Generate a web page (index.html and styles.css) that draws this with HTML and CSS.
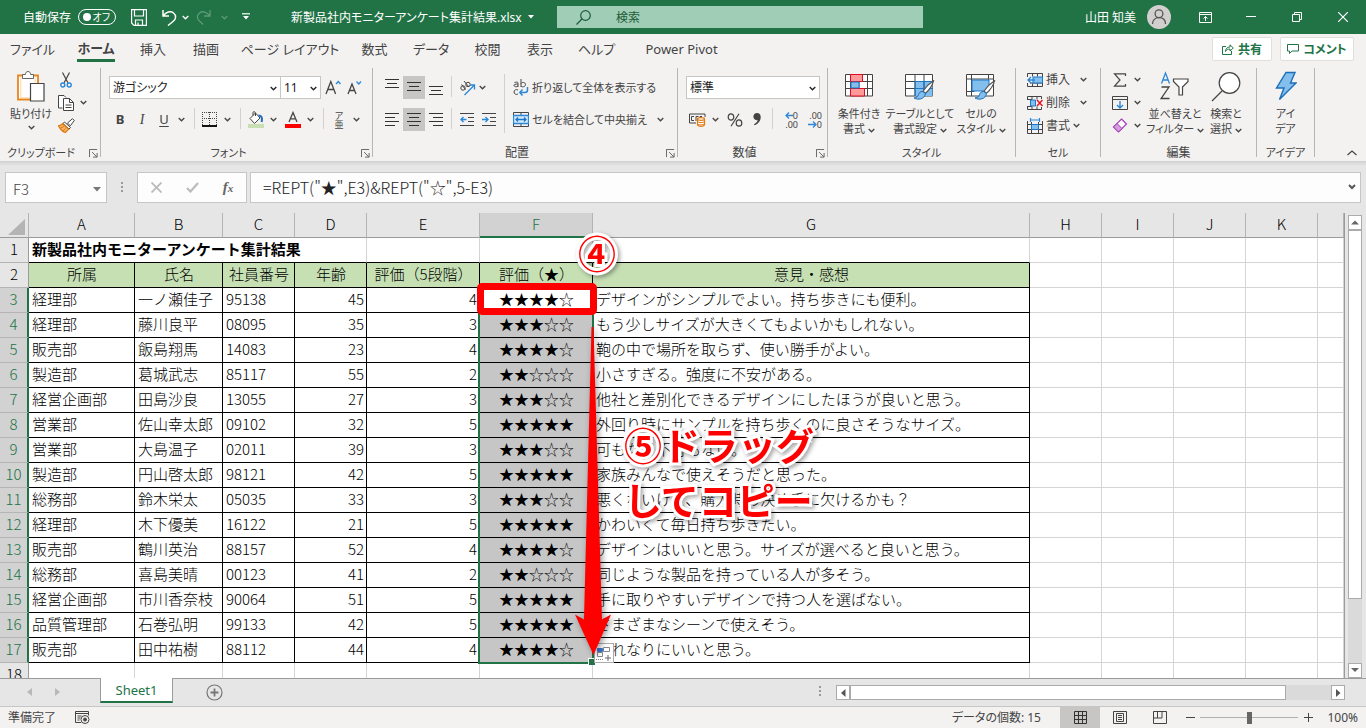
FILE: index.html
```
<!DOCTYPE html>
<html lang="ja">
<head>
<meta charset="utf-8">
<title>新製品社内モニターアンケート集計結果.xlsx</title>
<link rel="stylesheet" href="styles.css">
</head>
<body>
<svg class="defs" width="0" height="0" aria-hidden="true">
  <symbol id="chev" viewBox="0 0 7 5"><path d="M.7 1l2.8 2.8L6.300 1" fill="none" stroke="currentColor" stroke-width="1.300"/></symbol>
  <symbol id="launch" viewBox="0 0 10 10"><path d="M9 .5H.5V9M3.500 3.500l5 5M9 4.500V9H4.500" fill="none" stroke="#555"/></symbol>
  <symbol id="brush" viewBox="0 0 22 20"><path d="M20.500.8c-4 2.500-8 6.500-10.500 10.500l2.500 2C16 10 19.500 5 20.500.8z" fill="#fff" stroke="#555" stroke-width="1.200"/><path d="M9.500 11.500c-2 0-3.500 1-4 3-.5 2-2 3.200-4.500 3.500 4 2.200 10.500 1.500 11.500-4.500z" fill="#83beec" stroke="#1a6fb8"/></symbol>
</svg>

<header class="titlebar">
  <label class="autosave">自動保存
    <input type="checkbox" class="sr"><span class="toggle"><i></i>オフ</span>
  </label>
  <div class="quick">
    <button aria-label="保存"><svg width="16" height="17" viewBox="0 0 16 17" fill="none" stroke="#fff" stroke-width="1.200"><path d="M.6.6h14.800v15.800H3L.6 14zM3.500.6v6.400h9V.6M4.500 16.400v-5.400h7v5.400M7 16v-2.500"/></svg></button>
    <button aria-label="元に戻す"><svg width="15" height="17" viewBox="0 0 15 17" fill="none" stroke="#fff" stroke-width="1.500"><path d="M1 1v6h6M1.300 6.700C4 3 8.500 1.500 11.500 4s2.700 6-.5 8.500L6 16.500"/></svg></button>
    <button aria-label="元に戻すの一覧"><svg width="7" height="5"><use href="#chev"/></svg></button>
    <button aria-label="やり直し" class="dim"><svg width="15" height="17" viewBox="0 0 15 17" fill="none" stroke="currentColor" stroke-width="1.300"><path d="M14 1v6H8M13.700 6.700C11 3 6.500 1.500 3.500 4S.8 10 4 12.500l3 3"/></svg></button>
    <button aria-label="やり直しの一覧" class="dim"><svg width="7" height="5"><use href="#chev"/></svg></button>
    <button aria-label="クイック アクセスのカスタマイズ"><svg width="8" height="8" viewBox="0 0 8 8"><path d="M0 .8h8" stroke="#fff" stroke-width="1.200"/><path d="M1 3h6L4 6.500z" fill="#fff"/></svg></button>
  </div>
  <button class="filename">新製品社内モニターアンケート集計結果.xlsx <svg width="7" height="4" viewBox="0 0 7 4"><path d="M0 0h6L3 3.500z" fill="#fff"/></svg></button>
  <div class="search">
    <svg width="15" height="15" viewBox="0 0 15 15" fill="none" stroke="#1d5c39" stroke-width="1.200"><circle cx="9.500" cy="5.500" r="4.800"/><path d="M6 9L.5 14.500"/></svg>
    <input type="text" placeholder="検索" aria-label="検索">
  </div>
  <div class="account">
    <span>山田 知美</span>
    <svg width="24" height="24" viewBox="0 0 24 24"><circle cx="12" cy="12" r="12" fill="#d2d0ce"/><g fill="none" stroke="#555" stroke-width="1.300"><circle cx="12" cy="8.800" r="3.900"/><path d="M5.500 19c0-4 2.700-6.300 6.500-6.300s6.500 2.300 6.500 6.300"/></g></svg>
  </div>
  <div class="window">
    <button aria-label="リボンの表示オプション"><svg width="13" height="11" viewBox="0 0 13 11" fill="none" stroke="#fff"><path d="M.5.5h12v10H.5zM.5 2.500h12M6.500 9V4.500M4.500 6.500l2-2 2 2"/></svg></button>
    <button aria-label="最小化"><svg width="10" height="2"><path d="M0 .5h10" stroke="#fff"/></svg></button>
    <button aria-label="元に戻す"><svg width="10" height="10" viewBox="0 0 10 10" fill="none" stroke="#fff"><path d="M.5 2.500h7v7h-7zM2.500 2.500v-2h7v7h-2"/></svg></button>
    <button aria-label="閉じる"><svg width="10" height="10" viewBox="0 0 10 10" stroke="#fff" stroke-width="1.200"><path d="M0 0l10 10M10 0L0 10"/></svg></button>
  </div>
</header>

<nav class="tabs">
  <button>ファイル</button><button class="active"><span>ホーム</span></button><button>挿入</button><button>描画</button><button>ページ レイアウト</button><button>数式</button><button>データ</button><button>校閲</button><button>表示</button><button>ヘルプ</button><button>Power Pivot</button>
  <div class="share">
    <button><svg width="12" height="11" viewBox="0 0 12 11" fill="none" stroke="#217346"><path d="M4 2.500H.5v8h9V7M3.500 7.500C3.500 4.500 5.500 3 8 3V.8L11.300 4 8 7V5C6 5 4.500 5.800 3.500 7.500z"/></svg>共有</button>
    <button><svg width="12" height="10" viewBox="0 0 12 10" fill="none" stroke="#217346"><path d="M.5.5h11v6.500H5L2.500 9.500V7h-2z"/></svg>コメント</button>
  </div>
</nav>

<section class="ribbon">
  <div class="group g-clip">
    <div class="body">
      <button class="big">
        <svg width="28" height="31" viewBox="0 0 28 31"><path d="M1 4.500h20v24H1z" fill="#fff" stroke="#e8861e" stroke-width="1.800"/><path d="M3 7h16v20H3z" fill="#fbe3c0"/><path d="M4.500 8h13v18h-13z" fill="#fff"/><path d="M5.500 7.500V3.500h3C8.500 1.500 9.500.5 11 .5s2.500 1 2.500 3h3v4z" fill="#fff" stroke="#666"/><path d="M13.500 12.500h13.500v17.500H13.500z" fill="#fff" stroke="#444" stroke-width="1.200"/></svg>
        <span>貼り付け</span><svg class="chev" width="7" height="5"><use href="#chev"/></svg>
      </button>
      <div class="rows3">
        <button aria-label="切り取り"><svg width="16" height="16" viewBox="-2 0 16 16" fill="none"><path d="M2.500.5l5.500 10.500M9.500.5L4 11" stroke="#444" stroke-width="1.200"/><circle cx="2.800" cy="13" r="2" stroke="#2b88d8" stroke-width="1.400"/><circle cx="9.200" cy="13" r="2" stroke="#2b88d8" stroke-width="1.400"/></svg></button>
        <button aria-label="コピー"><svg width="16" height="16" viewBox="0 0 16 16" fill="#fff" stroke="#444"><path d="M4.500 13H.5V.5h5.500l2 2"/><path d="M5.500 3.500h6l4 4v8h-10z"/><path d="M11.500 3.500v4h4M7.500 10h6M7.500 12.500h6" fill="none"/></svg><svg class="chev" width="7" height="5"><use href="#chev"/></svg></button>
        <button aria-label="書式のコピー/貼り付け"><svg width="17" height="15" viewBox="0 0 17 15"><path d="M9.500 5L14.500.7l1.800 1.800-4 5.300z" fill="#fff" stroke="#444"/><path d="M6.500 4l6 5.500-1.500 1.500L5 5.500z" fill="#fff" stroke="#444"/><path d="M4.500 5.700C3.500 7 2 7.500.5 7.800c2 4 4.500 6 7 6.700 1-1.500 2.200-2.500 3.200-3.200z" fill="#f8b26a" stroke="#e07b10" stroke-width="1.200"/><path d="M2.500 10l3.500-1.500M5 13l2.500-2.500" stroke="#e07b10"/></svg></button>
      </div>
    </div>
    <div class="cap kana">クリップボード<button class="launch" aria-label="クリップボードの詳細"><svg width="9" height="9"><use href="#launch"/></svg></button></div>
  </div>

  <div class="group g-font">
    <div class="body lines">
      <div class="line">
        <span class="combo c-name"><select aria-label="フォント"><option>游ゴシック</option></select><svg width="7" height="5"><use href="#chev"/></svg></span>
        <span class="combo c-size"><select aria-label="フォント サイズ"><option>11</option></select><svg width="7" height="5"><use href="#chev"/></svg></span>
        <button class="grow" aria-label="フォント サイズの拡大"><svg width="16" height="16" viewBox="0 0 16 16" fill="none"><path d="M1 14L5.800 1.500l4.800 12.500M2.800 9.500h6" stroke="#444" stroke-width="1.300"/><path d="M11 4l2.300-2.500L15.500 4" stroke="#2b88d8" stroke-width="1.300"/></svg></button>
        <button aria-label="フォント サイズの縮小"><svg width="15" height="16" viewBox="0 0 15 16" fill="none"><path d="M1 14L5 4l4 10M2.500 10.500h5" stroke="#444" stroke-width="1.300"/><path d="M9.500 1.500L11.800 4l2.200-2.500" stroke="#2b88d8" stroke-width="1.300"/></svg></button>
      </div>
      <div class="line fontrow">
        <button class="b">B</button><button class="i">I</button><button class="u">U</button>
        <button aria-label="下線の種類"><svg width="7" height="5"><use href="#chev"/></svg></button><i class="sep"></i>
        <button aria-label="罫線"><svg width="15" height="15" viewBox="0 0 15 15" fill="none" stroke="#444"><path d="M0 .5h15M.5 0v13M14.500 0v13M7.500 0v13M0 6.500h15" stroke-dasharray="1 1"/><path d="M0 14h15" stroke="#111" stroke-width="2"/></svg></button>
        <button aria-label="罫線の一覧"><svg width="7" height="5"><use href="#chev"/></svg></button><i class="sep"></i>
        <button aria-label="塗りつぶしの色"><svg width="16" height="17" viewBox="0 0 16 17"><path d="M2 7.500L7.500 2l4.500 5-5.500 5.500z" fill="#fff" stroke="#444"/><path d="M5 4.500V1.500C5 .5 7 .2 7.500 2v3" fill="none" stroke="#444"/><path d="M10.500 4.500c3 0 4 2 3.200 6.500" fill="none" stroke="#1e6fc0" stroke-width="2"/><path d="M0 13h16v4H0z" fill="#c6e0b4"/></svg></button>
        <button aria-label="塗りつぶしの色の一覧"><svg width="7" height="5"><use href="#chev"/></svg></button>
        <button aria-label="フォントの色"><svg width="16" height="17" viewBox="0 0 16 17"><path d="M4 11L8 1.500l4 9.500M5.300 7.800h5.400" fill="none" stroke="#444" stroke-width="1.300"/><path d="M0 13h16v4H0z" fill="#f00"/></svg></button>
        <button aria-label="フォントの色の一覧"><svg width="7" height="5"><use href="#chev"/></svg></button><i class="sep"></i>
        <button class="ruby" aria-label="ふりがな"><small>ア</small><b>亜</b></button>
        <button aria-label="ふりがなの一覧"><svg width="7" height="5"><use href="#chev"/></svg></button>
      </div>
    </div>
    <div class="cap kana">フォント<button class="launch" aria-label="フォントの詳細"><svg width="9" height="9"><use href="#launch"/></svg></button></div>
  </div>

  <div class="group g-align">
    <div class="body">
      <div class="lines">
        <div class="line alignrow">
          <button aria-label="上揃え"><svg width="14" height="21" viewBox="0 0 14 21" stroke="#333"><path d="M0 2.500h14M2 6.500h10M0 10.500h14"/></svg></button>
          <button class="on" aria-label="上下中央揃え"><svg width="14" height="21" viewBox="0 0 14 21" stroke="#333"><path d="M0 5.500h14M2 9.500h10M0 13.500h14"/></svg></button>
          <button aria-label="下揃え"><svg width="14" height="21" viewBox="0 0 14 21" stroke="#333"><path d="M0 9.500h14M2 13.500h10M0 17.500h14"/></svg></button><i class="sep"></i>
          <button aria-label="方向"><svg width="17" height="16" viewBox="0 0 17 16" fill="none"><g stroke="#444"><circle cx="4" cy="8" r="2.200"/><path d="M2.500 4.500l4 5M5 1l5 6"/><circle cx="9" cy="4.500" r="2.200"/></g><path d="M5.500 15L15 5.500M11 5h4.500v4.500" stroke="#2b88d8" stroke-width="1.300"/></svg></button>
          <button aria-label="方向の一覧" class="near"><svg width="7" height="5"><use href="#chev"/></svg></button>
        </div>
        <div class="line alignrow">
          <button aria-label="左揃え"><svg width="14" height="15" viewBox="0 0 14 15" stroke="#333"><path d="M0 1.500h14M0 5.500h10M0 9.500h14M0 13.500h10"/></svg></button>
          <button class="on" aria-label="中央揃え"><svg width="14" height="15" viewBox="0 0 14 15" stroke="#333"><path d="M0 1.500h14M2 5.500h10M0 9.500h14M2 13.500h10"/></svg></button>
          <button aria-label="右揃え"><svg width="14" height="15" viewBox="0 0 14 15" stroke="#333"><path d="M0 1.500h14M4 5.500h10M0 9.500h14M4 13.500h10"/></svg></button><i class="sep"></i>
          <button aria-label="インデントを減らす"><svg width="14" height="15" viewBox="0 0 14 15" fill="none"><path d="M0 1.500h14M8 5.500h6M8 9.500h6M0 13.500h14" stroke="#444"/><path d="M6.500 7.500H1M3.500 5L1 7.500 3.500 10" stroke="#2b88d8" stroke-width="1.400"/></svg></button>
          <button aria-label="インデントを増やす"><svg width="14" height="15" viewBox="0 0 14 15" fill="none"><path d="M0 1.500h14M8 5.500h6M8 9.500h6M0 13.500h14" stroke="#444"/><path d="M0 7.500h6M3.500 5L6 7.500 3.500 10" stroke="#2b88d8" stroke-width="1.400"/></svg></button>
        </div>
      </div>
      <i class="sep tall"></i>
      <div class="lines">
        <div class="line"><button class="txt"><svg width="16" height="17" viewBox="0 0 16 17" fill="none"><g stroke="#444"><path d="M1.500 3.500c3.500-1 3.500 0 3.500 1V8M5 5C2 5 1 5.500 1 6.500S3.500 8.500 5 7M8 0v8M8 4.500C9 3 12.500 3 12.500 5.500S9 8.500 8 7M5 11C3 10 1 11 1 13s2 3 4 2"/></g><path d="M14.500 8v3c0 2-1 2.500-2.500 2.500H7M9.500 10.500L6.800 13.500l2.700 3" stroke="#2b88d8" stroke-width="1.500"/></svg><span>折り返して全体を表示する</span></button></div>
        <div class="line"><button class="txt"><svg width="16" height="15" viewBox="0 0 16 15" fill="none"><path d="M.5.500h15v14H.5zM8 .5v3M8 11.500v3" stroke="#444"/><path d="M.5 3.500h15v8H.5z" fill="#d5eafa" stroke="#2b88d8" stroke-width="1.300"/><path d="M3 7.500h10M5 5.500l-2 2 2 2M11 5.500l2 2-2 2" stroke="#1a77c9" stroke-width="1.300"/></svg><span>セルを結合して中央揃え</span></button><button class="push" aria-label="結合の一覧"><svg width="7" height="5"><use href="#chev"/></svg></button></div>
      </div>
    </div>
    <div class="cap">配置<button class="launch" aria-label="配置の詳細"><svg width="9" height="9"><use href="#launch"/></svg></button></div>
  </div>

  <div class="group g-num">
    <div class="body lines">
      <div class="line"><span class="combo c-fmt"><select aria-label="表示形式"><option>標準</option></select><svg width="7" height="5"><use href="#chev"/></svg></span></div>
      <div class="line numrow">
        <button aria-label="通貨表示形式"><svg width="17" height="14" viewBox="0 0 17 14" fill="none"><path d="M16 4V1H.5v9H7" stroke="#444"/><path d="M5 3.500H2.500v4H5M7 8V3.500h2.500M11 5V3.500h2" stroke="#444"/><path d="M8.500 6v6c1 1.800 6 1.800 7 0V6" fill="#fff" stroke="#e07b10" stroke-width="1.200"/><ellipse cx="12" cy="6" rx="3.500" ry="1.300" fill="#fff" stroke="#e07b10" stroke-width="1.200"/><path d="M8.500 8.500c1 1.500 6 1.500 7 0M8.500 10.800c1 1.500 6 1.500 7 0" stroke="#e07b10"/></svg></button>
        <button aria-label="通貨の一覧"><svg width="7" height="5"><use href="#chev"/></svg></button>
        <button aria-label="パーセント スタイル"><svg width="16" height="14" viewBox="0 0 16 14" fill="none" stroke="#444" stroke-width="1.200"><ellipse cx="4" cy="4" rx="2.800" ry="3.200"/><ellipse cx="12" cy="10" rx="2.800" ry="3.200"/><path d="M12 .8L4 13.300"/></svg></button>
        <button aria-label="桁区切りスタイル"><svg width="8" height="13" viewBox="0 0 8 13"><path d="M4 0c2.300 0 3.700 1.600 3.700 4 0 3.800-2.400 6.800-6.200 8.300L1 11.300c2.200-1.100 3.500-2.500 3.600-4.200C2 7.600.4 6 .4 3.600.4 1.500 1.900 0 4 0z" fill="#444"/></svg></button><i class="sep"></i>
        <button aria-label="小数点以下の表示桁数を増やす" class="dec"><span><svg width="8" height="7" viewBox="0 0 8 7" fill="none" stroke="#2b88d8" stroke-width="1.300"><path d="M8 3.500H1M4 .5l-3 3 3 3"/></svg>0</span><span>.00</span></button>
        <button aria-label="小数点以下の表示桁数を減らす" class="dec"><span>.00</span><span><svg width="9" height="7" viewBox="0 0 9 7" fill="none" stroke="#2b88d8" stroke-width="1.300"><path d="M0 3.500h8M5 .5l3 3-3 3"/></svg>0</span></button>
      </div>
    </div>
    <div class="cap">数値<button class="launch" aria-label="数値の詳細"><svg width="9" height="9"><use href="#launch"/></svg></button></div>
  </div>

  <div class="group g-style">
    <div class="body">
      <button class="big"><svg width="28" height="29" viewBox="0 0 28 29"><path d="M.5 3.500h27v21.500H.5z" fill="#fff" stroke="#444"/><path d="M.5 10.500h27M.5 17.500h27M5.500 3.500V25M14 3.500V25M22.500 3.500V25" stroke="#444"/><path d="M5.500 3.500h12v7h-12zM5.500 17.500h14V25h-14z" fill="#ff9a9a" stroke="#e00b1c"/><path d="M6 11h8v6H6z" fill="#83beec" stroke="#1a77c9"/></svg><span>条件付き<br>書式 <svg width="7" height="5"><use href="#chev"/></svg></span></button>
      <button class="big"><svg width="31" height="29" viewBox="0 0 31 29"><path d="M.5 3.500h27v21.500H.5z" fill="#fff" stroke="#444"/><path d="M10 11h17.500v14H10z" fill="#83beec"/><path d="M.5 10.500h27M.5 17.500h27M10 3.500V25M19 3.500V25" stroke="#444"/><path d="M10 10.500h17.500M10 17.500h17.500M10 10.500V25M19 10.500V25" stroke="#1a77c9"/><svg x="8" y="9" width="22" height="20"><use href="#brush"/></svg></svg><span>テーブルとして<br>書式設定 <svg width="7" height="5"><use href="#chev"/></svg></span></button>
      <button class="big"><svg width="31" height="29" viewBox="0 0 31 29"><path d="M.5 3.500h27v21.500H.5z" fill="#fff" stroke="#444"/><path d="M.5 8h27M5.500 3.500V25M22.500 3.500v5M.5 20.500h8" stroke="#444"/><path d="M6 9h17v11H6z" fill="#83beec" stroke="#1a77c9"/><svg x="8" y="9" width="22" height="20"><use href="#brush"/></svg></svg><span>セルの<br>スタイル <svg width="7" height="5"><use href="#chev"/></svg></span></button>
    </div>
    <div class="cap kana">スタイル</div>
  </div>

  <div class="group g-cell">
    <div class="body">
      <div class="rows3">
        <button><svg width="16" height="14" viewBox="0 0 16 14" fill="none"><path d="M.5 4V.5h15v13H.5V10M5.500.5v3M10.500.5v3M5.500 10.500v3M10.500 10.500v3M3 10h12.500" stroke="#444"/><path d="M6 4h9.500v6H6z" fill="#83beec" stroke="#1a77c9"/><path d="M8 7H1M4 4L1 7l3 3" stroke="#2b88d8" stroke-width="1.400"/></svg><span>挿入</span><svg class="chev" width="7" height="5"><use href="#chev"/></svg></button>
        <button><svg width="16" height="14" viewBox="0 0 16 14" fill="none"><path d="M.5 3.500V.5h14V3M5 .5v3M10 .5v3M.5 10.500v3h14V11M5 10.500v3M10 10.500v3M0 3.500h5M0 10.500h5" stroke="#444"/><path d="M3.500 4h5v6h-5z" fill="#83beec" stroke="#1a77c9"/><path d="M10 4l5.500 6M15.500 4L10 10" stroke="#e81123" stroke-width="1.500"/></svg><span>削除</span><svg class="chev" width="7" height="5"><use href="#chev"/></svg></button>
        <button><svg width="16" height="16" viewBox="0 0 16 16" fill="none"><path d="M.5 3v12.500h15V3M.5 6.500h15M.5 11.500h15M4.500 4v11.500M11.500 4v11.500" stroke="#444"/><path d="M4.500 6.500h7v5h-7z" fill="#83beec" stroke="#1a77c9"/><path d="M3.500 2h9M3.500 0v4M12.500 0v4" stroke="#2b88d8" stroke-width="1.200"/></svg><span>書式</span><svg width="7" height="5"><use href="#chev"/></svg></button>
      </div>
    </div>
    <div class="cap kana">セル</div>
  </div>

  <div class="group g-edit">
    <div class="body">
      <div class="rows3">
        <button aria-label="オート SUM"><svg width="16" height="14" viewBox="0 0 16 14" fill="none" stroke="#444" stroke-width="1.200"><path d="M13.500 3V.8h-11L8 7l-5.500 6.200h11V11"/></svg><svg width="7" height="5"><use href="#chev"/></svg></button>
        <button aria-label="フィル"><svg width="16" height="14" viewBox="0 0 16 14" fill="none"><path d="M.5.5h15v13H.5zM.5 3.500h15" stroke="#444"/><path d="M8 5v7M5 9l3 3 3-3" stroke="#2b88d8" stroke-width="1.400"/></svg><svg width="7" height="5"><use href="#chev"/></svg></button>
        <button aria-label="クリア"><svg width="16" height="15" viewBox="0 0 16 15"><path d="M9.500 1l5 5-8 8-5-5z" fill="#fff" stroke="#a33fb5" stroke-width="1.200"/><path d="M5 5.500l5 5L6.500 14l-5-5z" fill="#d59ddf" stroke="#a33fb5"/></svg><svg width="7" height="5"><use href="#chev"/></svg></button>
      </div>
      <button class="big"><svg width="30" height="31" viewBox="0 0 30 31" fill="none"><path d="M1.500 12.500L5.500 2l4 10.500M2.800 9h5.400" stroke="#2b88d8" stroke-width="1.300"/><path d="M1.500 16h7.500L1.200 27.500h8.300" stroke="#444" stroke-width="1.300"/><path d="M13.500 8h14.500v2.500l-5.500 5.500v8h-3.500v-8L13.500 10.500z" fill="#fff" stroke="#444" stroke-width="1.200"/></svg><span>並べ替えと<br>フィルター <svg width="7" height="5"><use href="#chev"/></svg></span></button>
      <button class="big"><svg width="30" height="31" viewBox="0 0 30 31"><circle cx="18.500" cy="12" r="10.300" fill="#fff" stroke="#444" stroke-width="1.200"/><path d="M11 20L1 30" stroke="#444" stroke-width="1.300"/></svg><span>検索と<br>選択 <svg width="7" height="5"><use href="#chev"/></svg></span></button>
    </div>
    <div class="cap">編集</div>
  </div>

  <div class="group g-idea">
    <div class="body"><button class="big"><svg width="22" height="30" viewBox="0 0 22 30"><path d="M11 1.500h9L15.500 12H21L4.500 28.500 9 17H1.500z" fill="#83beec" stroke="#1a6fb8" stroke-width="1.400"/></svg><span>アイ<br>デア</span></button></div>
    <div class="cap kana">アイデア</div>
  </div>
  <button class="collapse" aria-label="リボンを折りたたむ"><svg width="10" height="6" viewBox="0 0 10 6" fill="none" stroke="#444" stroke-width="1.200"><path d="M.5 5L5 1l4.500 4"/></svg></button>
</section>

<section class="fbar">
  <div class="namebox"><input type="text" value="F3" aria-label="名前ボックス"><svg width="8" height="5"><path d="M0 0h8L4 4.500z" fill="#777"/></svg></div>
  <svg class="dots" width="2" height="11" fill="#999"><path d="M0 0h2v2H0zM0 4h2v2H0zM0 8h2v2H0z"/></svg>
  <div class="fx">
    <button aria-label="キャンセル"><svg width="11" height="11" viewBox="0 0 11 11" stroke="#bbb" stroke-width="1.800"><path d="M.5.5l10 10M10.500.5l-10 10"/></svg></button>
    <button aria-label="入力"><svg width="13" height="11" viewBox="0 0 13 11" fill="none" stroke="#bbb" stroke-width="2.200"><path d="M1 6l3.500 3.500L12 1"/></svg></button>
    <button class="fn">f<sub>x</sub></button>
  </div>
  <div class="formula"><input type="text" value="=REPT(&quot;★&quot;,E3)&amp;REPT(&quot;☆&quot;,5-E3)" aria-label="数式バー"><svg width="8" height="6" viewBox="0 0 8 6"><path d="M1 1l3 3 3-3" fill="none" stroke="#555" stroke-width="2"/></svg></div>
</section>

<main class="workspace">
  <div class="sheet">
    <table>
      <colgroup><col class="w-h"><col class="w-a"><col class="w-b"><col class="w-c"><col class="w-c"><col class="w-e"><col class="w-e"><col class="w-g"><col class="w-c"><col class="w-c"><col class="w-c"><col class="w-c"><col></colgroup>
      <thead><tr><th class="corner"><svg width="17" height="16"><path d="M17 0v16H0z" fill="#b4b4b4"/></svg></th><th>A</th><th>B</th><th>C</th><th>D</th><th>E</th><th class="sel">F</th><th>G</th><th>H</th><th>I</th><th>J</th><th>K</th><th></th></tr></thead>
      <tbody>
        <tr class="title"><th>1</th><td colspan="4">新製品社内モニターアンケート集計結果</td><td></td><td></td><td></td><td></td><td></td><td></td><td></td><td></td></tr>
        <tr class="head"><th>2</th><td>所属</td><td>氏名</td><td>社員番号</td><td>年齢</td><td>評価（5段階）</td><td>評価（★）</td><td>意見・感想</td><td></td><td></td><td></td><td></td><td></td></tr>
        <tr class="rec"><th>3</th><td>経理部</td><td>一ノ瀬佳子</td><td>95138</td><td>45</td><td>4</td><td class="first">★★★★☆</td><td>デザインがシンプルでよい。持ち歩きにも便利。</td><td></td><td></td><td></td><td></td><td></td></tr>
        <tr class="rec"><th>4</th><td>経理部</td><td>藤川良平</td><td>08095</td><td>35</td><td>3</td><td>★★★☆☆</td><td>もう少しサイズが大きくてもよいかもしれない。</td><td></td><td></td><td></td><td></td><td></td></tr>
        <tr class="rec"><th>5</th><td>販売部</td><td>飯島翔馬</td><td>14083</td><td>23</td><td>4</td><td>★★★★☆</td><td>鞄の中で場所を取らず、使い勝手がよい。</td><td></td><td></td><td></td><td></td><td></td></tr>
        <tr class="rec"><th>6</th><td>製造部</td><td>葛城武志</td><td>85117</td><td>55</td><td>2</td><td>★★☆☆☆</td><td>小さすぎる。強度に不安がある。</td><td></td><td></td><td></td><td></td><td></td></tr>
        <tr class="rec"><th>7</th><td>経営企画部</td><td>田島沙良</td><td>13055</td><td>27</td><td>3</td><td>★★★☆☆</td><td>他社と差別化できるデザインにしたほうが良いと思う。</td><td></td><td></td><td></td><td></td><td></td></tr>
        <tr class="rec"><th>8</th><td>営業部</td><td>佐山幸太郎</td><td>09102</td><td>32</td><td>5</td><td>★★★★★</td><td>外回り時にサンプルを持ち歩くのに良さそうなサイズ。</td><td></td><td></td><td></td><td></td><td></td></tr>
        <tr class="rec"><th>9</th><td>営業部</td><td>大島温子</td><td>02011</td><td>39</td><td>3</td><td>★★★☆☆</td><td>可もなく不可もない。</td><td></td><td></td><td></td><td></td><td></td></tr>
        <tr class="rec"><th>10</th><td>製造部</td><td>円山啓太郎</td><td>98121</td><td>42</td><td>5</td><td>★★★★★</td><td>家族みんなで使えそうだと思った。</td><td></td><td></td><td></td><td></td><td></td></tr>
        <tr class="rec"><th>11</th><td>総務部</td><td>鈴木栄太</td><td>05035</td><td>33</td><td>3</td><td>★★★☆☆</td><td>悪くないけど、購入時の決め手に欠けるかも？</td><td></td><td></td><td></td><td></td><td></td></tr>
        <tr class="rec"><th>12</th><td>経理部</td><td>木下優美</td><td>16122</td><td>21</td><td>5</td><td>★★★★★</td><td>かわいくて毎日持ち歩きたい。</td><td></td><td></td><td></td><td></td><td></td></tr>
        <tr class="rec"><th>13</th><td>販売部</td><td>鶴川英治</td><td>88157</td><td>52</td><td>4</td><td>★★★★☆</td><td>デザインはいいと思う。サイズが選べると良いと思う。</td><td></td><td></td><td></td><td></td><td></td></tr>
        <tr class="rec"><th>14</th><td>総務部</td><td>喜島美晴</td><td>00123</td><td>41</td><td>2</td><td>★★☆☆☆</td><td>同じような製品を持っている人が多そう。</td><td></td><td></td><td></td><td></td><td></td></tr>
        <tr class="rec"><th>15</th><td>経営企画部</td><td>市川香奈枝</td><td>90064</td><td>51</td><td>5</td><td>★★★★★</td><td>手に取りやすいデザインで持つ人を選ばない。</td><td></td><td></td><td></td><td></td><td></td></tr>
        <tr class="rec"><th>16</th><td>品質管理部</td><td>石巻弘明</td><td>99133</td><td>42</td><td>5</td><td>★★★★★</td><td>さまざまなシーンで使えそう。</td><td></td><td></td><td></td><td></td><td></td></tr>
        <tr class="rec"><th>17</th><td>販売部</td><td>田中祐樹</td><td>88112</td><td>44</td><td>4</td><td>★★★★☆</td><td>それなりにいいと思う。</td><td></td><td></td><td></td><td></td><td></td></tr>
        <tr><th>18</th><td></td><td></td><td></td><td></td><td></td><td></td><td></td><td></td><td></td><td></td><td></td><td></td></tr>
      </tbody>
    </table>
    <div class="selection"></div>
    <button class="smarttag" aria-label="オートフィル オプション"><svg width="16" height="16" viewBox="0 0 16 16" fill="none"><path d="M1.500 3.500h5v3h-5z" fill="#3b78d8" stroke="#3b78d8"/><path d="M7.500 2.500h6v4h-6zM1.500 7.500h5v4h-5z" stroke="#888"/><path d="M0 14.500h8" stroke="#888" stroke-dasharray="1 1"/><path d="M9 13h6M12 10v6" stroke="#666"/></svg></button>
    <svg class="arrow" width="60" height="340" viewBox="0 0 60 340"><path d="M28.500 1L37 293.500l9-5L28.500 329 10 288.500l9 5L26.500 1z" fill="#f00"/></svg>
    <div class="redbox"></div>
    <div class="note n4">④</div>
    <div class="note n5">⑤ドラッグ<br>してコピー</div>
  </div>
  <div class="vscroll"><button aria-label="上へ"><svg width="8" height="5"><path d="M0 4.500h8L4 .5z" fill="#666"/></svg></button><div class="vthumb"></div><button class="end" aria-label="下へ"><svg width="8" height="5"><path d="M0 0h8L4 4z" fill="#666"/></svg></button></div>
</main>

<nav class="sheets">
  <button class="arr" aria-label="前のシート"><svg width="5" height="8"><path d="M5 0v8L0 4z" fill="#b8b8b8"/></svg></button>
  <button class="arr" aria-label="次のシート"><svg width="5" height="8"><path d="M0 0v8l5-4z" fill="#b8b8b8"/></svg></button>
  <button class="tab">Sheet1</button>
  <button class="plus" aria-label="新しいシート"><svg width="17" height="17" viewBox="0 0 17 17" fill="none" stroke="#777"><circle cx="8.500" cy="8.500" r="7.500" stroke-width="1.200"/><path d="M8.500 4.500v8M4.500 8.500h8" stroke-width="1.800"/></svg></button>
  <svg class="dots" width="2" height="11" fill="#999"><path d="M0 0h2v2H0zM0 4h2v2H0zM0 8h2v2H0z"/></svg>
  <div class="hscroll"><button aria-label="左へ"><svg width="5" height="8"><path d="M4.500 0v8L0 4z" fill="#555"/></svg></button><div class="hthumb"></div><button class="end" aria-label="右へ"><svg width="5" height="8"><path d="M0 0v8l4.500-4z" fill="#555"/></svg></button></div>
</nav>

<footer class="status">
  <span>準備完了</span>
  <button class="macro" aria-label="マクロの記録"><svg width="15" height="13" viewBox="0 0 15 13" fill="none" stroke="#444"><path d="M6 11.500H.5V.5h13v4M.5 2.500h13M2.500 5h4M2.500 7h3M2.500 9h2"/><circle cx="10" cy="8.500" r="4"/><circle cx="10" cy="8.500" r="1.500" fill="#444"/></svg></button>
  <span class="count">データの個数: 15</span>
  <button class="view on" aria-label="標準"><svg width="13" height="13" viewBox="0 0 13 13" fill="none" stroke="#333"><path d="M.5.5h12v12H.5zM4.500.5v12M8.500.5v12M.5 4.500h12M.5 8.500h12"/></svg></button>
  <button class="view" aria-label="ページ レイアウト"><svg width="14" height="13" viewBox="0 0 14 13" fill="none" stroke="#444"><path d="M.5.5h13v12H.5zM3.500 2.500h7v8h-7zM5 4.500h4M5 6.500h4M5 8.500h4"/></svg></button>
  <button class="view" aria-label="改ページ プレビュー"><svg width="14" height="13" viewBox="0 0 14 13" fill="none" stroke="#444"><path d="M.5.500h13v12H.5zM4.500.5v6.500h4.500V.5M.5 7h4"/></svg></button>
  <button class="zoombtn" aria-label="縮小"><svg width="9" height="9"><path d="M0 4.500h9" stroke="#444"/></svg></button>
  <input type="range" min="0" max="100" value="50" aria-label="ズーム">
  <button class="zoombtn" aria-label="拡大"><svg width="9" height="9"><path d="M0 4.500h9M4.500 0v9" stroke="#444"/></svg></button>
  <span class="pct">100%</span>
</footer>
</body>
</html>
```
FILE: styles.css
```
* { box-sizing: border-box; }
body {
  margin: 0;
  height: 100vh;
  display: flex;
  flex-direction: column;
  overflow: hidden;
  background: #e6e6e6;
  color: #444;
  font: 12px/15px "Noto Sans", "Noto Sans CJK JP", sans-serif;
  font-feature-settings: "palt";
}
button {
  border: 0;
  padding: 0;
  background: none;
  font: inherit;
  color: inherit;
  font-feature-settings: inherit;
  white-space: nowrap;
  display: flex;
  align-items: center;
  justify-content: center;
}
input, select { font: inherit; color: inherit; font-feature-settings: inherit; }
svg { flex: none; }
.defs, .sr { position: absolute; opacity: 0; }

/* Title bar */
.titlebar {
  flex: none;
  display: flex;
  align-items: center;
  height: 34px;
  padding-left: 23px;
  background: #217346;
  color: #fff;
}
.autosave { display: flex; align-items: center; gap: 7px; width: 93px; }
.toggle {
  display: flex;
  align-items: center;
  justify-content: space-between;
  width: 38px;
  height: 16px;
  padding: 0 5px 0 4px;
  border: 1px solid #fff;
  border-radius: 8px;
  font-size: 10px;
}
.toggle i { width: 8px; height: 8px; border-radius: 50%; background: #fff; }
.quick { display: grid; grid-template-columns: 46px 14px 18px 18px 24px 20px; width: 175px; }
.quick button { height: 20px; }
.dim { color: #5c9a78; }
.filename { gap: 6px; width: 230px; justify-content: flex-start; }
.search {
  display: flex;
  align-items: center;
  flex: 0 1 366px;
  height: 22px;
  margin-left: 36px;
  padding-left: 19px;
  gap: 25px;
  background: #a0cdb5;
}
.search input { flex: 1; min-width: 0; padding: 0; border: 0; background: none; outline: 0; }
.search input::placeholder { color: #1d5c39; opacity: 1; }
.account { display: flex; align-items: center; gap: 11px; margin-left: auto; }
.window { display: flex; padding-left: 11px; }
.window button { width: 46px; height: 32px; }

/* Tabs */
.tabs {
  flex: none;
  display: grid;
  grid-template-columns: 65px 62px 52px 54px 114px 55px 58px 55px 50px 63px 107px 1fr;
  height: 34px;
  background: #f3f2f1;
  font-size: 13px;
}
.tabs > button { height: 30px; }
.active { font-weight: bold; }
.active span { padding: 5px 0 3px; border-bottom: 3px solid #217346; line-height: 15px; }
.share { display: flex; justify-content: flex-end; gap: 8px; padding: 3px 12px 0 0; }
.share button {
  height: 24px;
  width: 60px;
  gap: 4px;
  background: #fff;
  border: 1px solid #e1dfdd;
  border-radius: 2px;
  color: #217346;
  font-size: 12px;
  font-weight: bold;
}
.share button + button { width: 74px; }

/* Ribbon */
.ribbon {
  flex: none;
  display: flex;
  height: 93px;
  padding-bottom: 4px;
  background: #f3f2f1;
}
.group { flex: none; display: flex; flex-direction: column; border-right: 1px solid #b8b6b4; }
.body { display: flex; height: 76px; }
.cap { position: relative; text-align: center; line-height: 18px; height: 13px; }
.kana, .big > span, .txt > span { font-size: 11px; }
.launch { position: absolute; right: 2px; top: 5px; }
.g-clip { width: 101px; }
.g-font { width: 272px; }
.g-align { width: 305px; }
.g-num { width: 150px; }
.g-style { width: 188px; }
.g-cell { width: 85px; }
.g-edit { width: 156px; }
.g-idea { width: 58px; }
.g-clip .cap { padding-right: 18px; }
.g-font .cap, .g-num .cap, .g-align .cap { padding-right: 16px; }
.big { flex-direction: column; justify-content: flex-start; text-align: center; }
.big > span { line-height: 15px; margin-top: 4px; }
.big span svg { vertical-align: middle; }
.big > svg:first-child { margin-top: 3px; }
.big > .chev { margin-top: 4px; }
.rows3 { display: grid; grid-template-rows: repeat(3, 23px); }
.rows3 button { justify-content: flex-start; }
.g-clip .body { padding-left: 8px; }
.g-clip .big { width: 46px; }
.g-clip .rows3 { margin-left: 4px; }
.g-clip .rows3 .chev { margin-left: 6px; }
.lines { display: flex; flex-direction: column; gap: 9px; padding-top: 8px; }
.body.lines { height: 76px; }
.line { display: flex; height: 23px; }
.g-font .line, .g-num .line { margin-left: 8px; }
.combo { position: relative; display: flex; border: 1px solid #c8c6c4; background: #fff; color: #222; }
.combo + .combo { border-left: 0; }
.combo select { appearance: none; width: 100%; border: 0; background: none; padding: 0 3px; outline: 0; color: #222; }
.combo svg { position: absolute; right: 3px; top: 9px; pointer-events: none; }
.c-name { width: 172px; }
.c-size { width: 40px; }
.c-fmt { width: 134px; }
.grow { margin: 0 6px 0 4px; }
.fontrow { display: grid; grid-template-columns: 22px 22px 22px 12px 15px 15px 20px 6px 26px 9px 30px 4px 22px 10px 24px; }
.fontrow .b { font-weight: bold; font-size: 13px; }
.fontrow .i { font: italic 14px "Liberation Serif", serif; }
.fontrow .u { text-decoration: underline; font-size: 13px; text-underline-offset: 2px; }
.sep { justify-self: center; width: 1px; height: 21px; background: #d2d0ce; }
.sep.tall { height: 59px; margin-top: 6px; }
.ruby { flex-direction: column; }
.ruby small, .ruby b { font-size: 9px; line-height: 9px; font-weight: 400; }
.g-align .body { padding-left: 8px; }
.alignrow { display: grid; grid-template-columns: 22px 22px 22px 8px 24px 20px; width: 123px; }
.on { background: #c8c6c4; }
.near { justify-content: flex-start; }
.g-align .tall + .lines { flex: 1; padding-left: 8px; padding-right: 13px; }
.txt { gap: 3px; }
.push { margin-left: auto; }
.numrow { display: grid; grid-template-columns: 22px 14px 26px 18px 12px 20px 24px; }
.dec { flex-direction: column; align-items: flex-end; font-size: 9px; line-height: 9px; }
.dec span { display: flex; align-items: center; }
.g-style .body { display: grid; grid-template-columns: 58px 64px 58px; padding-left: 2px; }
.g-style .big > span { margin-top: 6px; }
.g-cell .body { padding-left: 11px; }
.g-cell .rows3 { flex: 1; }
.g-cell .rows3 button { gap: 3px; }
.g-cell .rows3 .chev { margin-left: 7px; }
.g-edit .body { display: grid; grid-template-columns: 47px 54px 48px; }
.g-edit .rows3 { padding-left: 11px; }
.g-edit .rows3 button { gap: 6px; }
.g-idea .body { justify-content: center; }
.g-idea .big > span { margin-top: 5px; }
.collapse { margin: auto 9px 0 auto; height: 8px; }

/* Formula bar */
.fbar {
  flex: none;
  display: flex;
  height: 52px;
  padding: 11px 5px 10px;
  background: linear-gradient(#d0d0d0, #e6e6e6 5px);
}
.fbar > div { display: flex; align-items: center; background: #fdfdfd; border: 1px solid #c6c6c6; }
.fbar input { flex: 1; min-width: 0; border: 0; padding: 0; background: none; outline: 0; font: 300 15px/20px "Noto Sans CJK JP", sans-serif; font-feature-settings: normal; }
.fbar .namebox { width: 102px; padding: 3px 5px 0 7px; }
.fbar .dots { margin: 10px 14px 0 14px; }
.fx { width: 110px; }
.fx button { flex: 1; }
.fbar .fn { font: italic 700 15px "Liberation Serif", serif; color: #666; }
.fn sub { font-size: 11px; }
.fbar .formula { flex: 1; margin-left: 3px; padding: 0 4px 2px 12px; }
.fbar .formula input { font-size: 16px; color: #222; }

/* Grid */
.workspace { flex: 1; min-height: 0; display: flex; }
.sheet { position: relative; flex: 1; overflow: hidden; background: #fff; border-right: 1px solid #9b9b9b; }
table {
  width: 100%;
  table-layout: fixed;
  border-collapse: separate;
  border-spacing: 0;
  font: 300 15px/20px "Noto Sans CJK JP", sans-serif;
  font-feature-settings: normal;
  color: #000;
}
.w-h { width: 29px; }
.w-a { width: 106px; }
.w-b { width: 88px; }
.w-c { width: 72px; }
.w-e { width: 113px; }
.w-g { width: 437px; }
th, td { height: 25px; padding: 0 2px 2px 3px; border-right: 1px solid #d4d4d4; border-bottom: 1px solid #d4d4d4; white-space: nowrap; }
th { background: #e6e6e6; font-weight: 300; border-color: #b4b4b4; padding: 0 0 2px; }
tbody th { border-right-color: #9b9b9b; }
thead th { border-bottom-color: #9b9b9b; }
thead .corner { border-right-color: #b4b4b4; padding-right: 3px; }
.corner svg { display: block; margin: 6px 0 0 auto; }
thead .sel { background: #d2d2d2; color: #217346; border-bottom: 2px solid #217346; padding-bottom: 1px; }
.title td:nth-child(-n+5) { border-bottom-color: #000; }
.title td:first-of-type { font-weight: 700; }
.head td:nth-child(-n+8) { background: #c6e0b4; text-align: center; border-color: #000; }
.rec th { background: #d2d2d2; color: #217346; border-right: 2px solid #217346; }
.rec td:nth-child(-n+8) { border-color: #000; }
.rec td:nth-child(5), .rec td:nth-child(6) { text-align: right; }
.rec td:nth-child(7) { text-align: center; background: #c6c6c6; }
.rec td.first { background: #fff; }

/* Items drawn over the grid */
.selection { position: absolute; left: 478px; top: 73px; width: 116px; height: 378px; border: 2px solid #217346; }
.selection::after { content: ""; position: absolute; right: -3px; bottom: -3px; width: 6px; height: 6px; background: #217346; border: solid #fff; border-width: 1px 0 0 1px; }
.smarttag { position: absolute; left: 594px; top: 430px; width: 20px; height: 20px; background: #fff; border: 1px solid #ababab; }
.redbox { position: absolute; left: 477px; top: 70px; width: 120px; height: 32px; border: 7px solid #f00; border-radius: 5px; }
.arrow { position: absolute; left: 565px; top: 113px; filter: drop-shadow(2px 2px 3px rgba(0, 0, 0, .4)); }
.note {
  position: absolute;
  color: #f00;
  font: 700 38px/55px "Noto Sans CJK JP", sans-serif;
  font-feature-settings: normal;
  white-space: nowrap;
  -webkit-text-stroke: 6px #fff;
  paint-order: stroke fill;
  filter: drop-shadow(2px 2px 2px rgba(0, 0, 0, .35));
}
.n4 { left: 578px; top: 11px; }
.n5 { left: 624px; top: 203px; }

.vscroll { flex: none; display: flex; flex-direction: column; width: 14px; margin: 2px 4px 0 3px; background: #dadada; }
.vscroll button, .hscroll button { flex: none; width: 14px; height: 15px; background: #fff; border: 1px solid #ababab; }
.vthumb { flex: 0 1 369px; background: #fff; border: 1px solid #ababab; }
.end { margin: auto 0 0; }
.hscroll .end { margin: 0 0 0 auto; }

/* Sheet tabs */
.sheets { flex: none; display: flex; height: 28px; border-top: 1px solid #9b9b9b; padding: 0 21px 0 15px; color: #217346; }
.arr { width: 28px; height: 25px; }
.tab { width: 73px; height: 25px; margin: -1px 0 0 29px; padding-top: 2px; background: #fff; border: solid #9b9b9b; border-width: 0 1px; border-bottom: 2px solid #217346; font-size: 13px; }
.plus { width: 82px; height: 26px; }
.sheets .dots { margin: 7px 15px 0 auto; }
.hscroll { display: flex; flex: 0 1 509px; height: 15px; margin-top: 6px; background: #dadada; }
.hthumb { flex: 0 1 436px; background: #fff; border: 1px solid #ababab; }

/* Status bar */
.status { flex: none; display: flex; align-items: center; height: 22px; padding: 0 8px; background: #f3f2f1; border-top: 1px solid #c6c6c6; }
.macro { margin-left: 19px; }
.count { margin: 0 19px 0 auto; }
.view { width: 40px; height: 21px; }
.zoombtn { width: 20px; height: 20px; }
.status input { appearance: none; width: 98px; height: 12px; margin: 0; background: linear-gradient(#b0b0b0, #b0b0b0) center / 100% 1px no-repeat; }
.status input::-webkit-slider-thumb { appearance: none; width: 5px; height: 12px; background: #666; }
.pct { width: 40px; text-align: right; }
```
